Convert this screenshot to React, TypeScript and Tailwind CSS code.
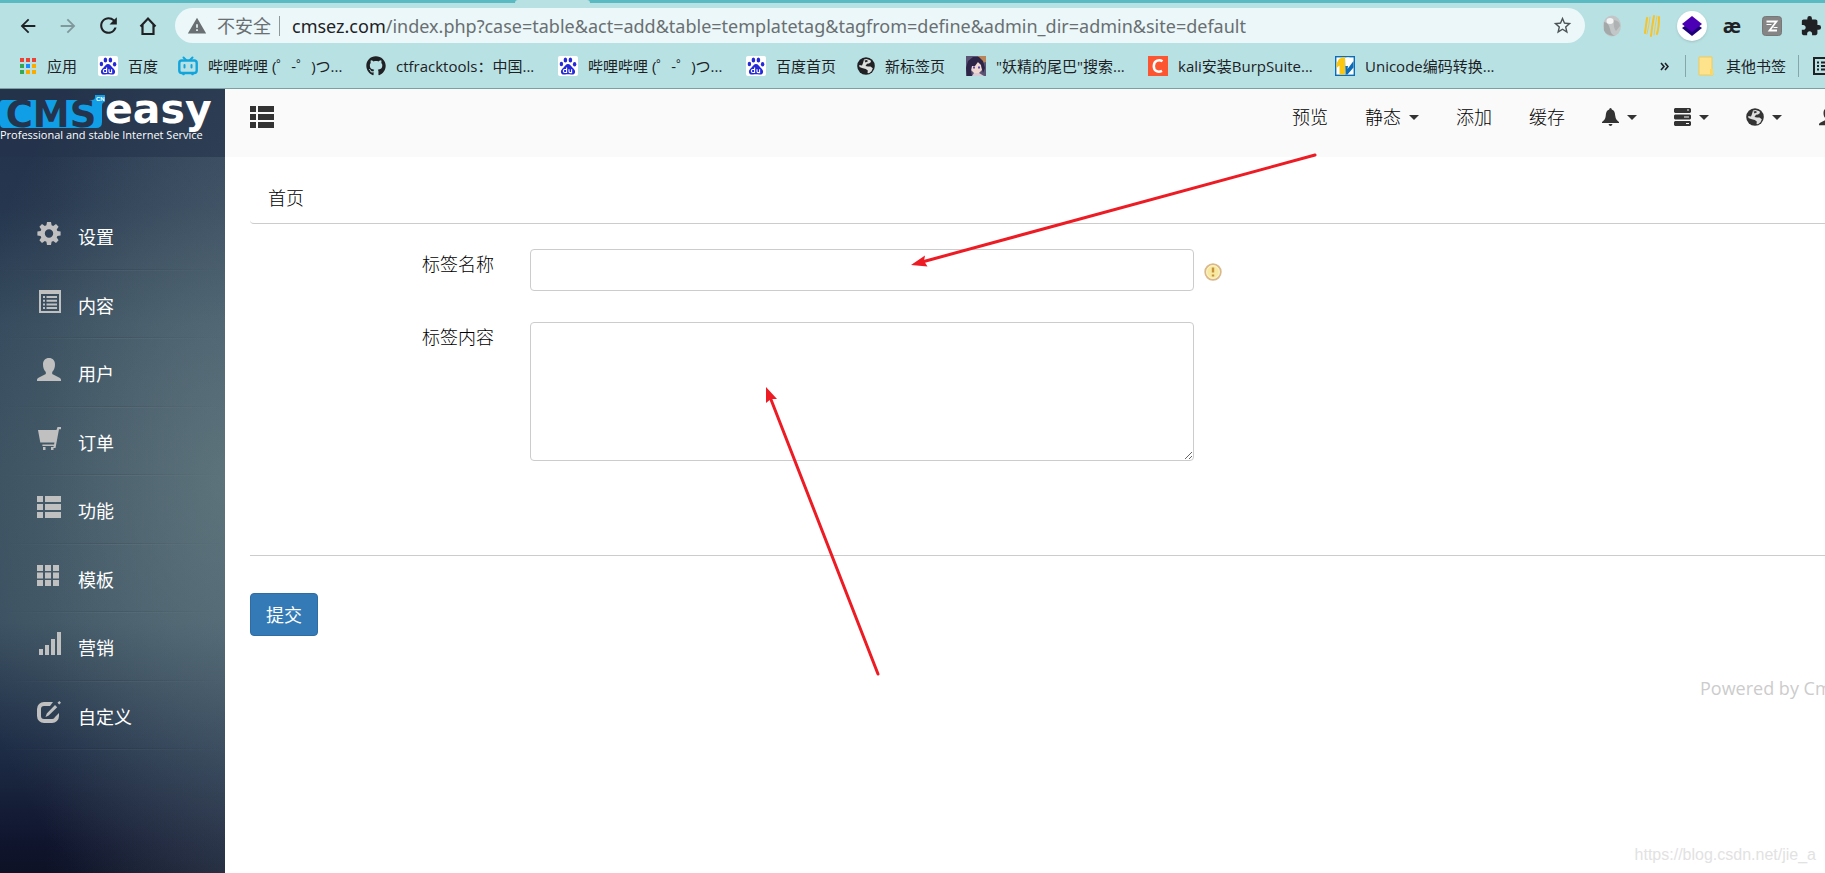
import type { ReactNode } from "react";
import { FaGithub } from "react-icons/fa";
import {
  MdArrowBack,
  MdArrowForward,
  MdExtension,
  MdRefresh,
  MdStarBorder,
  MdWarning,
} from "react-icons/md";

const url = {
  host: "cmsez.com",
  path: "/index.php?case=table&act=add&table=templatetag&tagfrom=define&admin_dir=admin&site=default",
};

/* ---------- bookmark icons ---------- */

function AppsIcon() {
  const colors = ["#ea4335", "#ea4335", "#ea4335", "#34a853", "#1a8cff", "#fbab00", "#34a853", "#fbab00", "#fbab00"];
  return (
    <svg width="18" height="18" viewBox="0 0 18 18">
      {colors.map((c, i) => (
        <rect key={i} x={(i % 3) * 6 + 1} y={Math.floor(i / 3) * 6 + 1} width="4" height="4" fill={c} />
      ))}
    </svg>
  );
}

function BaiduIcon() {
  return (
    <svg width="20" height="20" viewBox="0 0 20 20">
      <rect width="20" height="20" rx="2" fill="#fff" />
      <g fill="#2529d8">
        <ellipse cx="7.4" cy="4" rx="1.8" ry="2.6" />
        <ellipse cx="12.4" cy="4" rx="1.8" ry="2.6" />
        <ellipse cx="3.4" cy="8" rx="1.7" ry="2.3" />
        <ellipse cx="16.6" cy="8.2" rx="1.7" ry="2.3" />
        <path d="M10 8c2 0 3 2 4.4 3.600 2 1.900 3 3 2.600 4.800-.5 2.200-2.500 2.400-4 2.100-2-.3-4-.3-6 0-1.500.3-3.500.1-4-2.100-.4-1.800.6-2.900 2.600-4.800C7 10 8 8 10 8z" />
      </g>
      <path d="M8.600 11.500v5H6.800a1.500 1.500 0 0 1 0-3h1.800M11 13.300v2.300q0 1 1 1h1.600v-3.300" fill="none" stroke="#fff" strokeWidth="1.100" />
    </svg>
  );
}

function BilibiliIcon() {
  return (
    <svg width="20" height="20" viewBox="0 0 20 20" fill="none" stroke="#12a5dc" strokeLinecap="round">
      <path d="M5.500 1.500 8 4M14.500 1.500 12 4" strokeWidth="2" />
      <rect x="1.300" y="4.500" width="17.400" height="12.500" rx="2.500" strokeWidth="2.400" />
      <path d="M6.500 9v2.500M13.500 9v2.500" strokeWidth="2" />
      <path d="M5 18.500h1M14 18.500h1" strokeWidth="1.500" />
    </svg>
  );
}

function GlobeIcon() {
  return (
    <svg width="18" height="18" viewBox="0 0 18 18">
      <circle cx="9" cy="9" r="8.800" fill="currentColor" />
      <path d="M7 2.500 9.500 2l4 1.200.5 1.800-2 1.500-2 .2L8.500 9l2.500.6 2.500-.2 2.300 1.800-1.300 3-2.500 2-1.500-.2.3-2.500-2-1.500L5 11 2.500 10 2.200 8 5 8.500 6 6z" fill="#fff" opacity=".85" />
      <path d="M7.500 3.500 10 3l1 1.200L8.500 5.500z" fill="currentColor" />
    </svg>
  );
}

function PortraitIcon() {
  return (
    <svg width="20" height="20" viewBox="0 0 20 20">
      <rect width="20" height="20" fill="#5c5474" />
      <path d="M12 0h8v6l-4 1z" fill="#b98457" />
      <path d="M5 8 9 4l6 4 1 6-4 4H9l-4-4z" fill="#f0d8d0" />
      <path d="M0 12 2 5 7 1l6 0 4 4 2 7-2 5-2-8-3-3-3 4-3 0-1 5 1 5H1z" fill="#2c2548" />
      <path d="M7 11.500h2M12 11.500h2" stroke="#5b4bb0" strokeWidth="2" />
      <path d="M8 17h5l5 3H6z" fill="#d9cbd6" />
    </svg>
  );
}

function CsdnIcon() {
  return (
    <svg width="20" height="20" viewBox="0 0 20 20">
      <rect width="20" height="20" fill="#fc5531" />
      <path d="M14.500 5.300C11.500 3.300 6 4 5.800 10c-.1 5.500 4.700 6.700 8.200 4.900" fill="none" stroke="#fff" strokeWidth="2.500" />
    </svg>
  );
}

function ToolIcon() {
  return (
    <svg width="20" height="20" viewBox="0 0 20 20">
      <rect x=".7" y=".7" width="18.600" height="18.600" fill="#fff" stroke="#0b6cb8" strokeWidth="1.400" />
      <path d="M1.500 7.500 4 3l4-2h2v17.500H4.500V9.500L1.500 12z" fill="#fbc711" />
      <path d="M10 1v9h3l-.5 3 6-8v6.500l-6 7h-2z" fill="#0b6cb8" />
      <path d="M11.500 1.500h3L13 9h-1.500z" fill="#fff" />
    </svg>
  );
}

const bookmarks: { label: string; icon: ReactNode; width: string }[] = [
  { label: "应用", icon: <AppsIcon />, width: "w-[31px]" },
  { label: "百度", icon: <BaiduIcon />, width: "w-[30px]" },
  { label: "哔哩哔哩 (゜-゜)つ...", icon: <BilibiliIcon />, width: "w-[138px]" },
  { label: "ctfracktools：中国...", icon: <FaGithub size={20} />, width: "w-[142px]" },
  { label: "哔哩哔哩 (゜-゜)つ...", icon: <BaiduIcon />, width: "w-[138px]" },
  { label: "百度首页", icon: <BaiduIcon />, width: "w-[61px]" },
  { label: "新标签页", icon: <GlobeIcon />, width: "w-[61px]" },
  { label: "\"妖精的尾巴\"搜索...", icon: <PortraitIcon />, width: "w-[132px]" },
  { label: "kali安装BurpSuite...", icon: <CsdnIcon />, width: "w-[137px]" },
  { label: "Unicode编码转换...", icon: <ToolIcon />, width: "w-[132px]" },
];

function Extensions() {
  return (
    <div className="flex shrink-0 items-center text-[#202124]">
      <button aria-label="Pearl" className="flex w-10 justify-center">
        <svg width="20" height="22" viewBox="0 0 20 22">
          <ellipse cx="10" cy="11" rx="9" ry="10.500" fill="#c3c6c7" />
          <path d="M2 7q5 1 6 7t5 6.500q-8 1-11-5z" fill="#a3a8a9" />
          <path d="M12 5q6 1 6 6l-4 5q-3-3-2-11z" fill="#aeb2b3" />
          <ellipse cx="8" cy="6" rx="3.500" ry="3" fill="#f3f4f4" />
        </svg>
      </button>
      <button aria-label="Stripes" className="flex w-10 justify-center">
        <svg width="18" height="24" viewBox="0 0 18 24" fill="none" stroke="#f7c325" strokeWidth="2" strokeLinecap="round">
          <path d="M4 4Q3 12 2 19M11 2Q9 12 8 22M16 3q0 10-2 17" />
          <path d="M7 3Q6 12 4 20M14 2Q12 12 11 21" strokeWidth=".8" />
        </svg>
      </button>
      <button aria-label="Layers" className="flex w-10 justify-center">
        <span className="flex size-[30px] items-center justify-center rounded-full bg-white shadow">
          <svg width="22" height="22" viewBox="0 0 22 22">
            <path d="M1 13 11 6l10 7-10 8z" fill="#20007a" />
            <path d="M1 9 11 1l10 8-10 8z" fill="#4b00b5" />
          </svg>
        </span>
      </button>
      <button className="flex w-10 justify-center font-['Open_Sans',sans-serif] text-xl leading-6 font-bold">æ</button>
      <button aria-label="Notes" className="flex w-10 justify-center">
        <svg width="20" height="20" viewBox="0 0 20 20">
          <rect x=".5" y=".5" width="19" height="19" rx="3" fill="#858585" stroke="#777" />
          <path d="M4.500 5.500h10l-7 9h7.500" fill="none" stroke="#fff" strokeWidth="1.800" />
          <path d="M4.500 8.500h5M11.500 11.500h4" stroke="#fff" strokeWidth="1.200" />
        </svg>
      </button>
      <button aria-label="Extensions" className="flex w-[33px] justify-center pl-1">
        <MdExtension size={22} />
      </button>
    </div>
  );
}

function BrowserChrome() {
  return (
    <div className="shrink-0 border-b border-[#7c9fa3] bg-[#b8e1e4]">
      <div className="flex h-[3px] justify-between bg-[#5bbac1]">
        <span className="ml-[515px] h-[3px] w-[75px] rounded-t bg-[#b8e1e4]" />
      </div>
      <div className="flex h-[45px] items-center text-[#202124]">
        <div className="flex w-[175px] shrink-0 items-center pl-2">
          <button aria-label="后退" className="flex w-10 justify-center"><MdArrowBack size={22} /></button>
          <button aria-label="前进" className="flex w-10 justify-center text-[#7f989b]"><MdArrowForward size={22} /></button>
          <button aria-label="刷新" className="flex w-10 justify-center"><MdRefresh size={25} /></button>
          <button aria-label="主页" className="flex w-10 justify-center">
            <svg width="18" height="20" viewBox="0 0 18 20" fill="none" stroke="currentColor" strokeWidth="2.200">
              <path d="M3.500 9v9h11V9M1.500 10.500 9 2.500l7.500 8" />
            </svg>
          </button>
        </div>
        <div className="flex h-[35px] min-w-0 flex-1 items-center rounded-full bg-[#ebf7f8] px-3 text-lg text-[#696f72]">
          <MdWarning size={20} className="shrink-0" />
          <span className="ml-[10px] shrink-0">不安全</span>
          <span className="mx-2 h-5 w-px shrink-0 bg-[#8d989a]" />
          <span className="flex-1 overflow-hidden pl-1 font-['Noto_Sans','Noto_Sans_CJK_SC',sans-serif] whitespace-nowrap">
            <span className="text-[#202124]">{url.host}</span>{url.path}
          </span>
          <button aria-label="收藏" className="text-[#4d5356]"><MdStarBorder size={21} /></button>
        </div>
        <div className="w-[7px] shrink-0" />
        <Extensions />
      </div>
      <div className="flex h-10 items-center overflow-hidden pb-1 pl-[19px] text-[15px] text-[#202124]">
        <div className="flex items-center gap-5">
          {bookmarks.map((b, i) => (
            <a key={i} href="#" className="flex shrink-0 items-center gap-[10px]">
              {b.icon}
              <span className={`whitespace-nowrap ${b.width}`}>{b.label}</span>
            </a>
          ))}
        </div>
        <div className="ml-auto flex shrink-0 items-center">
          <button aria-label="更多书签" className="mr-4">
            <svg width="9" height="9" viewBox="0 0 9 9" fill="none" stroke="currentColor" strokeWidth="1.600">
              <path d="M1 1l3 3.500L1 8M5 1l3 3.500L5 8" />
            </svg>
          </button>
          <span className="h-[22px] w-px bg-[#86a6a9]" />
          <a href="#" className="mx-3 flex items-center gap-3">
            <svg width="16" height="20" viewBox="0 0 16 20">
              <path d="M1 1h13v13l1 5H1z" fill="#ffe38c" stroke="#f0cb56" />
              <path d="M12 13h3v6h-3z" fill="#ffd75e" />
            </svg>
            其他书签
          </a>
          <span className="h-[22px] w-px bg-[#86a6a9]" />
          <button aria-label="阅读清单" className="ml-[14px] w-3 overflow-hidden">
            <svg width="20" height="18" viewBox="0 0 20 18" fill="none" stroke="currentColor" strokeWidth="2">
              <path d="M19 1H1v16h18M4 5.500h2M8 5.500h10M4 9h2M8 9h10M4 12.500h2M8 12.500h10" />
            </svg>
          </button>
        </div>
      </div>
    </div>
  );
}

/* ---------- admin panel icons, drawn on a 24px grid ---------- */

function Glyph({ children }: { children: ReactNode }) {
  return (
    <svg width="24" height="24" viewBox="0 0 24 24" fill="currentColor" className="shrink-0">
      {children}
    </svg>
  );
}

function ListGlyph() {
  return (
    <Glyph>
      <path d="M0 1h6v6H0zM8 1h16v6H8zM0 9h6v6H0zM8 9h16v6H8zM0 17h6v6H0zM8 17h16v6H8z" />
    </Glyph>
  );
}

const menu: { label: string; icon: ReactNode }[] = [
  {
    label: "设置",
    icon: (
      <Glyph>
        <path
          fillRule="evenodd"
          d="M10 1h4l.6 3.200 1.600.7L19 3l2.600 2.700-1.900 2.800.7 1.500 3.200.6v3.800l-3.200.6-.7 1.600 1.900 2.700L19 22l-2.800-1.900-1.600.7L14 24h-4l-.6-3.200-1.600-.7L5 22l-2.600-2.700 1.900-2.700-.7-1.600L.4 14.400v-3.800l3.200-.6.7-1.500-1.900-2.800L5 3l2.800 1.900 1.600-.7zM12 8.300a4.200 4.200 0 1 0 0 8.400 4.200 4.200 0 0 0 0-8.400z"
        />
      </Glyph>
    ),
  },
  {
    label: "内容",
    icon: (
      <Glyph>
        <path fillRule="evenodd" d="M2 0h22v23H2zM4 4v17h18V4z" />
        <path d="M6 6h2v2H6zM9.500 6H20v2H9.500zM6 9.700h2v2H6zM9.500 9.700H20v2H9.500zM6 13.400h2v2H6zM9.500 13.400H20v2H9.500zM6 17h2v2H6zM9.500 17H20v2H9.500z" />
      </Glyph>
    ),
  },
  {
    label: "用户",
    icon: (
      <Glyph>
        <path d="M12 0c3.700 0 6 2.500 6 6.500 0 3.300-1 5.800-2.800 7.500v2l7.300 3.700c1 .5 1.500 1.300 1.500 2.300v1H0v-1c0-1 .5-1.800 1.500-2.300L8.800 16v-2C7 12.300 6 9.800 6 6.500 6 2.500 8.300 0 12 0z" />
      </Glyph>
    ),
  },
  {
    label: "订单",
    icon: (
      <Glyph>
        <path d="M20.500 0H24v2.200h-2L18.500 21h-2.200l.4-2H5.500a1.500 1.500 0 0 1 0-1.500h11.600l.3-2H3.300L1 3h18.500zM6 20h2.500v3H6zM14 20h2.500v3H14z" />
      </Glyph>
    ),
  },
  { label: "功能", icon: <ListGlyph /> },
  {
    label: "模板",
    icon: (
      <Glyph>
        <path d="M0 1h6v6H0zM8 1h6v6H8zM16 1h6v6h-6zM0 8.500h6v6H0zM8 8.500h6v6H8zM16 8.500h6v6h-6zM0 16h6v6H0zM8 16h6v6H8zM16 16h6v6h-6z" />
      </Glyph>
    ),
  },
  {
    label: "营销",
    icon: (
      <Glyph>
        <path d="M2 17h4v6H2zM8 13h4v10H8zM14 7h4v16h-4zM20 0h4v23h-4z" />
      </Glyph>
    ),
  },
  {
    label: "自定义",
    icon: (
      <Glyph>
        <path d="M16 1H7a7 7 0 0 0-7 7v7a7 7 0 0 0 7 7h8a7 7 0 0 0 7-7v-3l-4 4a3 3 0 0 1-3 2H7a3 3 0 0 1-3-3V8a3 3 0 0 1 3-3h6z" />
        <path d="M18 4l2.200 2.200-8.500 8.300-3.200 1.500 1.300-3.600zM20.500 1.800 22.300 0 24 1.700 22.200 3.500z" />
      </Glyph>
    ),
  },
];

function Logo() {
  return (
    <svg width="225" height="56" viewBox="0 0 225 56" role="img" aria-label="CMSeasy">
      <path d="M3 11H92q3 0 3-3V6h10v7q-3 0-3 4v16q0 6-6 6H4q-4 0-4-4V14q0-3 3-3z" fill="#109fe6" />
      <text x="51" y="38" textAnchor="middle" fontFamily="DejaVu Sans, sans-serif" fontSize="37" fontWeight="700" fill="#24344c">CMS</text>
      <text x="96" y="12" fontFamily="Liberation Sans, sans-serif" fontSize="6" fontWeight="700" fill="#fff">CN</text>
      <text x="105" y="34" fontFamily="DejaVu Sans, sans-serif" fontSize="41" fontWeight="700" fill="#fff">easy</text>
      <text x="0" y="50" fontFamily="Open Sans, sans-serif" fontSize="11" fill="#fff">Professional and stable Internet Service</text>
    </svg>
  );
}

function Sidebar() {
  return (
    <aside className="w-[225px] shrink-0 bg-[radial-gradient(ellipse_120%_60%_at_100%_50%,rgba(130,152,146,0.4),rgba(130,152,146,0)),linear-gradient(to_right,rgba(110,135,155,0)_20%,rgba(110,135,155,0.2)),linear-gradient(to_bottom,#22324a_0%,#25364e_15%,#34495c_30%,#3a4f60_48%,#3a5061_68%,#1e2d46_84%,#10152e_96%,#0d1226_100%)]">
      <div className="h-[68px] overflow-hidden bg-[#24334b]/60">
        <Logo />
      </div>
      <nav className="mt-[45px] grid h-[548px] grid-rows-8">
        {menu.map((m) => (
          <a key={m.label} href="#" className="flex flex-col text-lg text-white">
            <span className="flex flex-1 items-center gap-[17px] pt-1 pl-[37px]">
              <span className="-mt-2 text-[#c0c0c0]">{m.icon}</span>
              {m.label}
            </span>
            <span className="h-px bg-linear-to-r from-transparent via-black/10 to-transparent" />
            <span className="h-px bg-linear-to-r from-transparent via-white/5 to-transparent" />
          </a>
        ))}
      </nav>
    </aside>
  );
}

function Caret() {
  return <span className="border-x-[5px] border-t-[5px] border-x-transparent border-t-[#333]" />;
}

function TopBar() {
  return (
    <header className="flex h-[68px] items-start bg-[#fafafa] pt-3 pl-[25px] text-lg text-[#333]">
      <button aria-label="菜单" className="mt-1"><ListGlyph /></button>
      <nav className="ml-auto flex h-8 items-center gap-[37px]">
        <a href="#" className="font-light text-black">预览</a>
        <a href="#" className="flex items-center gap-2 font-light text-black">静态 <Caret /></a>
        <a href="#" className="font-light text-black">添加</a>
        <a href="#" className="font-light text-black">缓存</a>
        <button aria-label="通知" className="flex items-center gap-2">
          <svg width="17" height="18" viewBox="0 0 17 18" fill="currentColor">
            <path d="M8.500 0q1.300 0 1.300 1.500C12.500 2.300 13 5 13.300 8c.3 3 1.500 4.500 3.700 6v1H0v-1c2.200-1.500 3.400-3 3.700-6 .3-3 .8-5.700 3.500-6.500Q7.200 0 8.500 0zM6.500 16h4q-.5 2-2 2t-2-2z" />
          </svg>
          <Caret />
        </button>
        <button aria-label="数据" className="flex items-center gap-2">
          <svg width="17" height="18" viewBox="0 0 17 18">
            <path d="M1 0h15l1 1v3l-1 1H1L0 4V1zM1 6.500h15l1 1v3l-1 1H1l-1-1v-3zM1 13h15l1 1v3l-1 1H1l-1-1v-3z" fill="currentColor" />
            <path d="M13 2h2M10 9h5M12 15.500h3" stroke="#fafafa" strokeWidth="1.200" />
          </svg>
          <Caret />
        </button>
        <button aria-label="语言" className="flex items-center gap-2">
          <GlobeIcon />
          <Caret />
        </button>
        <button aria-label="用户" className="w-[6px] overflow-hidden">
          <svg width="18" height="18" viewBox="0 0 24 24" fill="currentColor">
            <path d="M12 0c3.700 0 6 2.500 6 6.500 0 3.300-1 5.800-2.800 7.500v2l7.300 3.700c1 .5 1.500 1.300 1.500 2.300v1H0v-1c0-1 .5-1.800 1.500-2.300L8.800 16v-2C7 12.300 6 9.800 6 6.500 6 2.500 8.300 0 12 0z" />
          </svg>
        </button>
      </nav>
    </header>
  );
}

function TagForm() {
  return (
    <form className="pl-[25px] text-lg text-black" onSubmit={(e) => e.preventDefault()}>
      <div className="flex h-[67px] items-end rounded-bl border-b border-[#ccc] pb-[11px] pl-[18px] font-light">
        <a href="#">首页</a>
      </div>
      <div className="mt-[25px] flex items-start gap-9">
        <label htmlFor="tag-name" className="w-[244px] shrink-0 pt-px text-right font-light">标签名称</label>
        <div className="flex flex-1 items-center gap-[10px]">
          <input id="tag-name" type="text" className="h-[42px] w-full max-w-[664px] rounded border border-[#ccc] bg-white px-3 outline-none" />
          <svg width="18" height="18" viewBox="0 0 18 18" className="mt-1 shrink-0">
            <circle cx="9" cy="9" r="7.800" fill="#f7e9a0" stroke="#dab88c" strokeWidth="1.800" />
            <circle cx="9" cy="9" r="6.300" fill="none" stroke="#fbf4d0" strokeWidth="1" />
            <path d="M9 4.500v5M9 11.500v2" stroke="#c8923c" strokeWidth="2.400" />
          </svg>
        </div>
      </div>
      <div className="mt-[31px] flex items-start gap-9">
        <label htmlFor="tag-content" className="w-[244px] shrink-0 pt-px text-right font-light">标签内容</label>
        <div className="flex flex-1">
          <textarea id="tag-content" className="h-[139px] w-full max-w-[664px] resize rounded border border-[#ccc] bg-white px-3 outline-none" />
        </div>
      </div>
      <div className="mt-[94px] border-t border-[#ccc] pt-[37px]">
        <button type="submit" className="h-[43px] rounded border border-[#2e6da4] bg-[#337ab7] px-[15px] text-white">提交</button>
      </div>
    </form>
  );
}

// hand-drawn pointers over the two fields
function Pointers() {
  return (
    <svg width="600" height="600" className="pointer-events-none absolute top-[100px] left-[750px] text-[#ed1c24]">
      <g stroke="currentColor" strokeWidth="3" strokeLinecap="round">
        <path d="M565 55 172 162" />
        <path d="M128 574 20 297" />
      </g>
      <g fill="currentColor">
        <path d="M161 165 175 155.500 174 161 177.500 166.500z" />
        <path d="M16 287 27 299 21 299 16 303z" />
      </g>
    </svg>
  );
}

export default function App() {
  return (
    <div className="relative flex min-h-screen flex-col overflow-hidden bg-white font-['Open_Sans','Noto_Sans_CJK_SC',sans-serif]">
      <BrowserChrome />
      <div className="flex flex-1">
        <Sidebar />
        <main className="flex min-w-0 flex-1 flex-col">
          <TopBar />
          <TagForm />
          <footer className="mt-[38px] w-[125px] self-end overflow-hidden text-lg whitespace-nowrap text-[#ccc]">
            Powered by CmsEasy
          </footer>
        </main>
      </div>
      <Pointers />
      <div className="absolute right-[9px] bottom-[6px] font-['Liberation_Sans',sans-serif] text-base text-[#e2e2e2]">
        https://blog.csdn.net/jie_a
      </div>
    </div>
  );
}
